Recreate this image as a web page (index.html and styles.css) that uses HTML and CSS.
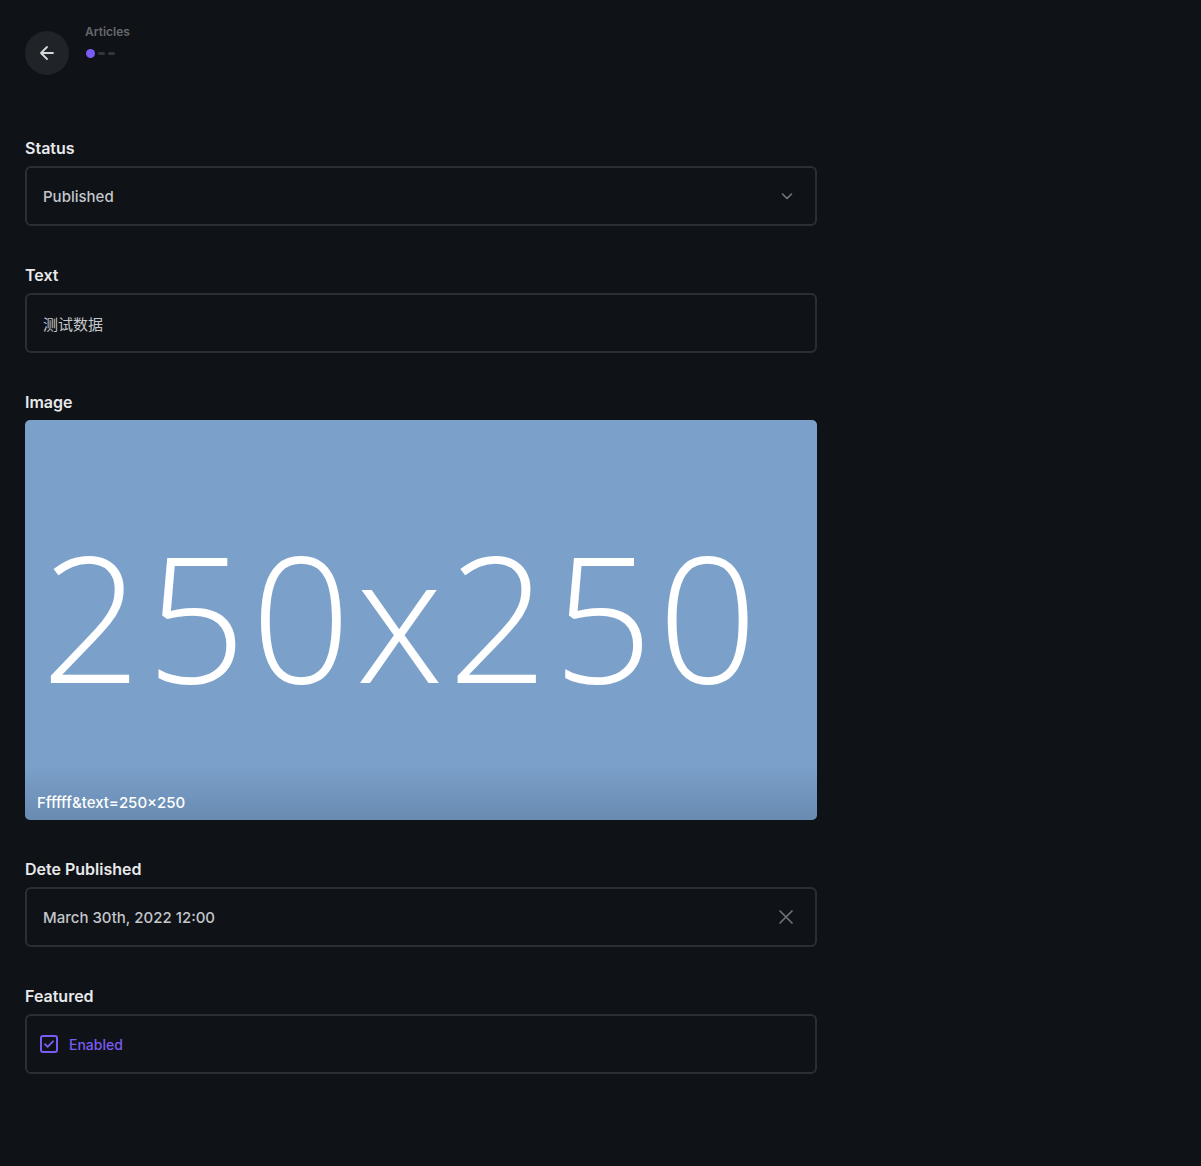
FILE: index.html
```html
<!DOCTYPE html>
<html lang="en">
<head>
<meta charset="utf-8">
<title>Articles</title>
<link rel="stylesheet" href="styles.css">
</head>
<body>
<header class="topbar">
  <button class="back" aria-label="Back">
    <svg width="20" height="20" viewBox="0 0 20 20" fill="none" stroke="#d6d8db" stroke-width="1.8" stroke-linecap="round" stroke-linejoin="round"><path d="M16 10H4.5M10 4l-6 6 6 6"/></svg>
  </button>
  <div class="crumb">
    <div class="crumb-title">Articles</div>
    <div class="steps"><span class="dot"></span><span class="dash"></span><span class="dash"></span></div>
  </div>
</header>
<main class="form">
  <section class="field">
    <label class="label">Status</label>
    <div class="box">
      <span class="value">Published</span>
      <svg class="chev" width="14" height="14" viewBox="0 0 14 14" fill="none" stroke="#74777d" stroke-width="1.6" stroke-linecap="round" stroke-linejoin="round"><path d="M2.5 5l4.5 4.5L11.5 5"/></svg>
    </div>
  </section>
  <section class="field">
    <label class="label">Text</label>
    <div class="box"><span class="value cjk">测试数据</span></div>
  </section>
  <section class="field">
    <label class="label">Image</label>
    <div class="image">
      <div class="placeholder">250x250</div>
      <div class="caption">Ffffff&amp;text=250×250</div>
    </div>
  </section>
  <section class="field">
    <label class="label">Dete Published</label>
    <div class="box">
      <span class="value">March 30th, 2022 12:00</span>
      <svg class="clear" width="18" height="18" viewBox="0 0 18 18" fill="none" stroke="#6f7278" stroke-width="1.7" stroke-linecap="round"><path d="M3 3l12 12M15 3L3 15"/></svg>
    </div>
  </section>
  <section class="field">
    <label class="label">Featured</label>
    <div class="box box-check">
      <span class="check">
        <svg width="18" height="18" viewBox="0 0 18 18" fill="none"><rect x="1" y="1" width="16" height="16" rx="2" stroke="#7b5cf2" stroke-width="2"/><path d="M5 9.2l2.6 2.6L13 6.3" stroke="#7b5cf2" stroke-width="1.9" stroke-linecap="round" stroke-linejoin="round"/></svg>
      </span>
      <span class="enabled">Enabled</span>
    </div>
  </section>
</main>
</body>
</html>
```
FILE: styles.css
```css
* { box-sizing: border-box; }
html, body { margin: 0; padding: 0; }
body {
  background: #0f1216;
  font-family: Inter, "Noto Sans", sans-serif;
  color: #e6e7e9;
  min-height: 1166px;
}
.topbar {
  display: flex;
  align-items: flex-start;
  gap: 16px;
  padding: 31px 0 0 25px;
}
.back {
  width: 44px;
  height: 44px;
  border-radius: 50%;
  border: none;
  background: #202328;
  display: flex;
  align-items: center;
  justify-content: center;
  padding: 0;
}
.crumb-title {
  font-size: 12px;
  font-weight: 600;
  color: #65686e;
  line-height: 1;
  margin-top: -5px;
}
.steps {
  display: flex;
  align-items: center;
  gap: 3px;
  margin-top: 11px;
}
.dot {
  width: 9px; height: 9px; border-radius: 50%;
  background: #7a5cf5;
  margin-left: 1px;
}
.dash {
  width: 7px; height: 3px; border-radius: 2px;
  background: #33363b;
}
.form {
  width: 792px;
  margin-left: 25px;
  padding-top: 63px;
  display: flex;
  flex-direction: column;
  gap: 39px;
}
.field { display: flex; flex-direction: column; gap: 8px; }
.label {
  font-size: 16px;
  font-weight: 600;
  line-height: 20px;
  color: #e8e9eb;
}
.box {
  height: 60px;
  border: 2px solid #2b2e33;
  border-radius: 6px;
  display: flex;
  align-items: center;
  padding: 0 20px 0 16px;
}
.value {
  flex: 1;
  font-size: 15px;
  color: #c3c6cb;
  font-weight: 500;
}
.cjk { font-family: Inter, "Noto Sans CJK SC", sans-serif; font-weight: 400; }
.chev { margin-right: 1px; }
.image {
  position: relative;
  height: 400px;
  border-radius: 5px;
  overflow: hidden;
  background: #7ba1ca;
  display: flex;
  align-items: center;
  justify-content: center;
}
.placeholder {
  font-family: "Open Sans", sans-serif;
  font-weight: 300;
  font-size: 175px;
  letter-spacing: 5px;
  color: #fff;
  line-height: 1;
  margin-left: -38px;
  margin-top: -10px;
}
.caption {
  position: absolute;
  left: 0; right: 0; bottom: 0;
  height: 56px;
  padding: 0 12px 8px;
  display: flex;
  align-items: flex-end;
  font-size: 15px;
  font-weight: 500;
  color: #fff;
  background: linear-gradient(to bottom, rgba(40,60,90,0) 0%, rgba(40,60,90,0.22) 100%);
}
.box-check { padding-left: 13px; gap: 11px; }
.check { display: flex; }
.enabled {
  font-size: 14px;
  font-weight: 500;
  color: #7b5cf2;
}
```
